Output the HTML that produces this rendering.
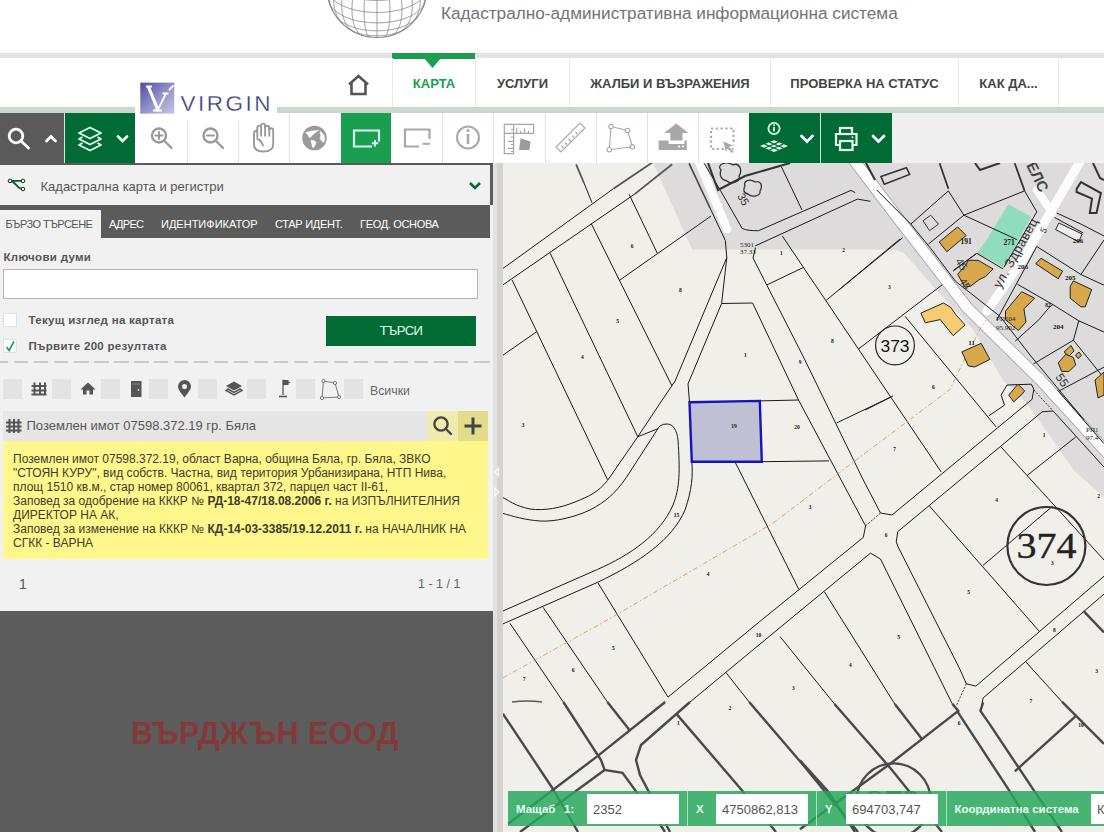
<!DOCTYPE html>
<html><head><meta charset="utf-8">
<style>
*{box-sizing:border-box;margin:0;padding:0}
html,body{width:1104px;height:836px;overflow:hidden;background:#fff;font-family:"Liberation Sans",sans-serif}
.abs{position:absolute}
svg{position:absolute;overflow:visible}
#title{left:441px;top:3px;font-size:17.2px;color:#737373;white-space:nowrap}
#gline{left:0;top:53px;width:1104px;height:5px;background:#e3e3e3}
.ni{position:absolute;top:58px;height:49px;border-left:1px solid #e8e8e8;font-size:13px;font-weight:bold;color:#444;text-align:center;line-height:51px;white-space:nowrap}
#ggline{left:0;top:107px;width:1104px;height:6px;background:#c9d8cc}
#tb{left:0;top:113px;width:1104px;height:50px;background:#efefef}
.tbw{position:absolute;top:113px;height:50px;width:52px;background:#fff;border-left:1px solid #e2e2e2}
.tbg{position:absolute;top:113px;height:50px;background:#006b35}
#panel{left:0;top:163px;width:493px;height:673px;background:#f1f1f1;border-top:2px solid #5a5a5a}
#scr{left:493px;top:163px;width:10px;height:673px;background:linear-gradient(90deg,#e2e2e2 0,#e2e2e2 40%,#d2d2d2 40%,#d2d2d2 100%)}
#map{left:503px;top:163px;width:601px;height:673px;background:#f1efe9;overflow:hidden}
.tab{position:absolute;top:210px;height:28px;line-height:28px;font-size:11px;color:#fff;white-space:nowrap}
.lbl{position:absolute;font-size:11.5px;letter-spacing:0.3px;font-weight:bold;color:#555;white-space:nowrap}
.sq{position:absolute;top:379px;width:19px;height:20px;background:#e3e3e3}
.yl{white-space:nowrap}
#ybox{left:3px;top:441px;width:485px;height:118px;background:#fff68c;padding:10.5px 10px 0 10px;font-size:12px;line-height:14px;color:#3d3d2a}
.bl{position:absolute;top:802.5px;font-size:11.5px;font-weight:bold;color:#e6fff0;white-space:nowrap}
.bi{position:absolute;top:794px;height:30px;background:#fff;font-size:13px;color:#555;padding-left:6px;line-height:32.5px;white-space:nowrap;overflow:hidden}
</style></head><body>
<!-- header -->
<svg style="left:0;top:0" width="1104" height="53"><g fill="none" stroke="#8a8a8a" stroke-width="0.9"><path d="M376.6 37.5L377.0 37.5L377.4 37.5M348.4 28.5L348.8 28.8L349.1 29.0L349.5 29.2L349.9 29.5L350.3 29.7L350.7 29.9L351.1 30.2L351.6 30.4L352.0 30.6L352.4 30.8L352.9 31.0L353.3 31.3L353.8 31.5L354.3 31.7L354.8 31.9L355.2 32.0L355.7 32.2L356.2 32.4L356.7 32.6L357.2 32.8L357.7 32.9L358.3 33.1L358.8 33.3L359.3 33.4L359.9 33.6L360.4 33.7L360.9 33.9L361.5 34.0L362.1 34.1L362.6 34.3L363.2 34.4L363.8 34.5L364.3 34.6L364.9 34.7L365.5 34.8L366.1 34.9L366.7 35.0L367.3 35.1L367.8 35.2L368.4 35.3L369.0 35.3L369.6 35.4L370.3 35.5L370.9 35.5L371.5 35.6L372.1 35.6L372.7 35.7L373.3 35.7L373.9 35.7L374.5 35.8L375.1 35.8L375.8 35.8L376.4 35.8L377.0 35.8L377.6 35.8L378.2 35.8L378.9 35.8L379.5 35.8L380.1 35.7L380.7 35.7L381.3 35.7L381.9 35.6L382.5 35.6L383.1 35.5L383.7 35.5L384.4 35.4L385.0 35.3L385.6 35.3L386.2 35.2L386.7 35.1L387.3 35.0L387.9 34.9L388.5 34.8L389.1 34.7L389.7 34.6L390.2 34.5L390.8 34.4L391.4 34.3L391.9 34.1L392.5 34.0L393.1 33.9L393.6 33.7L394.1 33.6L394.7 33.4L395.2 33.3L395.7 33.1L396.3 32.9L396.8 32.8L397.3 32.6L397.8 32.4L398.3 32.2L398.8 32.0L399.2 31.9L399.7 31.7L400.2 31.5L400.7 31.3L401.1 31.0L401.6 30.8L402.0 30.6L402.4 30.4L402.9 30.2L403.3 29.9L403.7 29.7L404.1 29.5L404.5 29.2L404.9 29.0L405.2 28.8L405.6 28.5M336.3 16.6L336.6 16.9L336.9 17.3L337.1 17.6L337.4 18.0L337.8 18.3L338.1 18.6L338.4 19.0L338.8 19.3L339.1 19.6L339.5 20.0L339.9 20.3L340.3 20.6L340.7 20.9L341.1 21.3L341.5 21.6L342.0 21.9L342.4 22.2L342.9 22.5L343.3 22.8L343.8 23.1L344.3 23.4L344.8 23.6L345.3 23.9L345.9 24.2L346.4 24.5L346.9 24.7L347.5 25.0L348.0 25.2L348.6 25.5L349.2 25.7L349.7 26.0L350.3 26.2L350.9 26.4L351.5 26.7L352.2 26.9L352.8 27.1L353.4 27.3L354.1 27.5L354.7 27.7L355.3 27.9L356.0 28.1L356.7 28.3L357.3 28.4L358.0 28.6L358.7 28.8L359.4 28.9L360.1 29.1L360.8 29.2L361.5 29.4L362.2 29.5L362.9 29.6L363.6 29.7L364.3 29.9L365.1 30.0L365.8 30.1L366.5 30.2L367.3 30.2L368.0 30.3L368.7 30.4L369.5 30.5L370.2 30.5L371.0 30.6L371.7 30.6L372.5 30.7L373.2 30.7L374.0 30.7L374.7 30.8L375.5 30.8L376.2 30.8L377.0 30.8L377.8 30.8L378.5 30.8L379.3 30.8L380.0 30.7L380.8 30.7L381.5 30.7L382.3 30.6L383.0 30.6L383.8 30.5L384.5 30.5L385.3 30.4L386.0 30.3L386.7 30.2L387.5 30.2L388.2 30.1L388.9 30.0L389.7 29.9L390.4 29.7L391.1 29.6L391.8 29.5L392.5 29.4L393.2 29.2L393.9 29.1L394.6 28.9L395.3 28.8L396.0 28.6L396.7 28.4L397.3 28.3L398.0 28.1L398.7 27.9L399.3 27.7L399.9 27.5L400.6 27.3L401.2 27.1L401.8 26.9L402.5 26.7L403.1 26.4L403.7 26.2L404.3 26.0L404.8 25.7L405.4 25.5L406.0 25.2L406.5 25.0L407.1 24.7L407.6 24.5L408.1 24.2L408.7 23.9L409.2 23.6L409.7 23.4L410.2 23.1L410.7 22.8L411.1 22.5L411.6 22.2L412.0 21.9L412.5 21.6L412.9 21.3L413.3 20.9L413.7 20.6L414.1 20.3L414.5 20.0L414.9 19.6L415.2 19.3L415.6 19.0L415.9 18.6L416.2 18.3L416.6 18.0L416.9 17.6L417.1 17.3L417.4 16.9L417.7 16.6M329.3 2.5L329.4 2.9L329.6 3.3L329.8 3.7L329.9 4.1L330.1 4.5L330.3 5.0L330.6 5.4L330.8 5.8L331.1 6.2L331.3 6.6L331.6 7.0L331.9 7.4L332.2 7.8L332.5 8.1L332.9 8.5L333.2 8.9L333.6 9.3L334.0 9.7L334.4 10.0L334.8 10.4L335.2 10.8L335.6 11.1L336.0 11.5L336.5 11.9L337.0 12.2L337.4 12.6L337.9 12.9L338.4 13.2L338.9 13.6L339.5 13.9L340.0 14.2L340.6 14.5L341.1 14.9L341.7 15.2L342.3 15.5L342.8 15.8L343.5 16.1L344.1 16.4L344.7 16.7L345.3 16.9L346.0 17.2L346.6 17.5L347.3 17.7L347.9 18.0L348.6 18.2L349.3 18.5L350.0 18.7L350.7 19.0L351.4 19.2L352.1 19.4L352.9 19.6L353.6 19.8L354.3 20.0L355.1 20.2L355.8 20.4L356.6 20.6L357.4 20.8L358.1 20.9L358.9 21.1L359.7 21.3L360.5 21.4L361.3 21.5L362.1 21.7L362.9 21.8L363.7 21.9L364.5 22.0L365.3 22.1L366.1 22.2L367.0 22.3L367.8 22.4L368.6 22.5L369.4 22.6L370.3 22.6L371.1 22.7L372.0 22.7L372.8 22.8L373.6 22.8L374.5 22.8L375.3 22.8L376.2 22.9L377.0 22.9L377.8 22.9L378.7 22.8L379.5 22.8L380.4 22.8L381.2 22.8L382.0 22.7L382.9 22.7L383.7 22.6L384.6 22.6L385.4 22.5L386.2 22.4L387.0 22.3L387.9 22.2L388.7 22.1L389.5 22.0L390.3 21.9L391.1 21.8L391.9 21.7L392.7 21.5L393.5 21.4L394.3 21.3L395.1 21.1L395.9 20.9L396.6 20.8L397.4 20.6L398.2 20.4L398.9 20.2L399.7 20.0L400.4 19.8L401.1 19.6L401.9 19.4L402.6 19.2L403.3 19.0L404.0 18.7L404.7 18.5L405.4 18.2L406.1 18.0L406.7 17.7L407.4 17.5L408.0 17.2L408.7 16.9L409.3 16.7L409.9 16.4L410.5 16.1L411.2 15.8L411.7 15.5L412.3 15.2L412.9 14.9L413.4 14.5L414.0 14.2L414.5 13.9L415.1 13.6L415.6 13.2L416.1 12.9L416.6 12.6L417.0 12.2L417.5 11.9L418.0 11.5L418.4 11.1L418.8 10.8L419.2 10.4L419.6 10.0L420.0 9.7L420.4 9.3L420.8 8.9L421.1 8.5L421.5 8.1L421.8 7.8L422.1 7.4L422.4 7.0L422.7 6.6L422.9 6.2L423.2 5.8L423.4 5.4L423.7 5.0L423.9 4.5L424.1 4.1L424.2 3.7L424.4 3.3L424.6 2.9L424.7 2.5M327.0 -12.5L327.0 -12.1L327.0 -11.6L327.1 -11.2L327.1 -10.8L327.2 -10.3L327.3 -9.9L327.4 -9.5L327.5 -9.0L327.6 -8.6L327.8 -8.2L327.9 -7.7L328.1 -7.3L328.3 -6.9L328.5 -6.5L328.7 -6.0L328.9 -5.6L329.2 -5.2L329.4 -4.8L329.7 -4.4L330.0 -3.9L330.3 -3.5L330.6 -3.1L331.0 -2.7L331.3 -2.3L331.7 -1.9L332.1 -1.5L332.4 -1.2L332.9 -0.8L333.3 -0.4L333.7 0.0L334.1 0.4L334.6 0.7L335.1 1.1L335.5 1.5L336.0 1.8L336.5 2.2L337.1 2.5L337.6 2.9L338.1 3.2L338.7 3.6L339.3 3.9L339.8 4.2L340.4 4.5L341.0 4.9L341.6 5.2L342.3 5.5L342.9 5.8L343.5 6.1L344.2 6.4L344.9 6.7L345.5 6.9L346.2 7.2L346.9 7.5L347.6 7.7L348.3 8.0L349.0 8.2L349.8 8.5L350.5 8.7L351.2 8.9L352.0 9.2L352.8 9.4L353.5 9.6L354.3 9.8L355.1 10.0L355.9 10.2L356.7 10.3L357.5 10.5L358.3 10.7L359.1 10.8L359.9 11.0L360.7 11.1L361.5 11.3L362.4 11.4L363.2 11.5L364.1 11.6L364.9 11.8L365.8 11.9L366.6 12.0L367.5 12.0L368.3 12.1L369.2 12.2L370.0 12.3L370.9 12.3L371.8 12.4L372.6 12.4L373.5 12.4L374.4 12.5L375.3 12.5L376.1 12.5L377.0 12.5L377.9 12.5L378.7 12.5L379.6 12.5L380.5 12.4L381.4 12.4L382.2 12.4L383.1 12.3L384.0 12.3L384.8 12.2L385.7 12.1L386.5 12.0L387.4 12.0L388.2 11.9L389.1 11.8L389.9 11.6L390.8 11.5L391.6 11.4L392.5 11.3L393.3 11.1L394.1 11.0L394.9 10.8L395.7 10.7L396.5 10.5L397.3 10.3L398.1 10.2L398.9 10.0L399.7 9.8L400.5 9.6L401.2 9.4L402.0 9.2L402.8 8.9L403.5 8.7L404.2 8.5L405.0 8.2L405.7 8.0L406.4 7.7L407.1 7.5L407.8 7.2L408.5 6.9L409.1 6.7L409.8 6.4L410.5 6.1L411.1 5.8L411.7 5.5L412.4 5.2L413.0 4.9L413.6 4.5L414.2 4.2L414.7 3.9L415.3 3.6L415.9 3.2L416.4 2.9L416.9 2.5L417.5 2.2L418.0 1.8L418.5 1.5L418.9 1.1L419.4 0.7L419.9 0.4L420.3 0.0L420.7 -0.4L421.1 -0.8L421.6 -1.2L421.9 -1.5L422.3 -1.9L422.7 -2.3L423.0 -2.7L423.4 -3.1L423.7 -3.5L424.0 -3.9L424.3 -4.4L424.6 -4.8L424.8 -5.2L425.1 -5.6L425.3 -6.0L425.5 -6.5L425.7 -6.9L425.9 -7.3L426.1 -7.7L426.2 -8.2L426.4 -8.6L426.5 -9.0L426.6 -9.5L426.7 -9.9L426.8 -10.3L426.9 -10.8L426.9 -11.2L427.0 -11.6L427.0 -12.1L427.0 -12.5M329.2 -27.1L329.1 -26.7L329.0 -26.2L328.9 -25.8L328.8 -25.4L328.8 -25.0L328.7 -24.5L328.7 -24.1L328.7 -23.7L328.7 -23.3L328.7 -22.9L328.8 -22.4L328.8 -22.0L328.9 -21.6L329.0 -21.2L329.1 -20.8L329.2 -20.3L329.3 -19.9L329.4 -19.5L329.6 -19.1L329.8 -18.7L329.9 -18.3L330.1 -17.9L330.3 -17.5L330.6 -17.1L330.8 -16.6L331.1 -16.2L331.3 -15.8L331.6 -15.4L331.9 -15.1L332.2 -14.7L332.5 -14.3L332.9 -13.9L333.2 -13.5L333.6 -13.1L334.0 -12.7L334.4 -12.4L334.8 -12.0L335.2 -11.6L335.6 -11.3L336.0 -10.9L336.5 -10.6L337.0 -10.2L337.4 -9.9L337.9 -9.5L338.4 -9.2L338.9 -8.8L339.5 -8.5L340.0 -8.2L340.6 -7.9L341.1 -7.5L341.7 -7.2L342.3 -6.9L342.8 -6.6L343.5 -6.3L344.1 -6.0L344.7 -5.8L345.3 -5.5L346.0 -5.2L346.6 -4.9L347.3 -4.7L347.9 -4.4L348.6 -4.2L349.3 -3.9L350.0 -3.7L350.7 -3.5L351.4 -3.2L352.1 -3.0L352.9 -2.8L353.6 -2.6L354.3 -2.4L355.1 -2.2L355.8 -2.0L356.6 -1.8L357.4 -1.6L358.1 -1.5L358.9 -1.3L359.7 -1.2L360.5 -1.0L361.3 -0.9L362.1 -0.7L362.9 -0.6L363.7 -0.5L364.5 -0.4L365.3 -0.3L366.1 -0.2L367.0 -0.1L367.8 -0.0L368.6 0.1L369.4 0.1L370.3 0.2L371.1 0.3L372.0 0.3L372.8 0.3L373.6 0.4L374.5 0.4L375.3 0.4L376.2 0.4L377.0 0.4L377.8 0.4L378.7 0.4L379.5 0.4L380.4 0.4L381.2 0.3L382.0 0.3L382.9 0.3L383.7 0.2L384.6 0.1L385.4 0.1L386.2 -0.0L387.0 -0.1L387.9 -0.2L388.7 -0.3L389.5 -0.4L390.3 -0.5L391.1 -0.6L391.9 -0.7L392.7 -0.9L393.5 -1.0L394.3 -1.2L395.1 -1.3L395.9 -1.5L396.6 -1.6L397.4 -1.8L398.2 -2.0L398.9 -2.2L399.7 -2.4L400.4 -2.6L401.1 -2.8L401.9 -3.0L402.6 -3.2L403.3 -3.5L404.0 -3.7L404.7 -3.9L405.4 -4.2L406.1 -4.4L406.7 -4.7L407.4 -4.9L408.0 -5.2L408.7 -5.5L409.3 -5.8L409.9 -6.0L410.5 -6.3L411.2 -6.6L411.7 -6.9L412.3 -7.2L412.9 -7.5L413.4 -7.9L414.0 -8.2L414.5 -8.5L415.1 -8.8L415.6 -9.2L416.1 -9.5L416.6 -9.9L417.0 -10.2L417.5 -10.6L418.0 -10.9L418.4 -11.3L418.8 -11.6L419.2 -12.0L419.6 -12.4L420.0 -12.7L420.4 -13.1L420.8 -13.5L421.1 -13.9L421.5 -14.3L421.8 -14.7L422.1 -15.1L422.4 -15.4L422.7 -15.8L422.9 -16.2L423.2 -16.6L423.4 -17.1L423.7 -17.5L423.9 -17.9L424.1 -18.3L424.2 -18.7L424.4 -19.1L424.6 -19.5L424.7 -19.9L424.8 -20.3L424.9 -20.8L425.0 -21.2L425.1 -21.6L425.2 -22.0L425.2 -22.4L425.3 -22.9L425.3 -23.3L425.3 -23.7L425.3 -24.1L425.3 -24.5L425.2 -25.0L425.2 -25.4L425.1 -25.8L425.0 -26.2L424.9 -26.7L424.8 -27.1M377.0 -55.8L377.0 -55.4L377.0 -54.9L377.0 -54.4L377.0 -54.0L377.0 -53.5L377.0 -53.0L377.0 -52.4L377.0 -51.9L377.0 -51.4L377.0 -50.8L377.0 -50.2L377.0 -49.7L377.0 -49.1L377.0 -48.5L377.0 -47.9L377.0 -47.2L377.0 -46.6L377.0 -46.0L377.0 -45.3L377.0 -44.6L377.0 -44.0L377.0 -43.3L377.0 -42.6L377.0 -41.9L377.0 -41.2L377.0 -40.5L377.0 -39.7L377.0 -39.0L377.0 -38.3L377.0 -37.5L377.0 -36.7L377.0 -36.0L377.0 -35.2L377.0 -34.4L377.0 -33.6L377.0 -32.8L377.0 -32.0L377.0 -31.2L377.0 -30.4L377.0 -29.6L377.0 -28.8L377.0 -28.0L377.0 -27.1L377.0 -26.3L377.0 -25.4L377.0 -24.6L377.0 -23.7L377.0 -22.9L377.0 -22.0L377.0 -21.2L377.0 -20.3L377.0 -19.5L377.0 -18.6L377.0 -17.7L377.0 -16.9L377.0 -16.0L377.0 -15.1L377.0 -14.2L377.0 -13.4L377.0 -12.5L377.0 -11.6L377.0 -10.8L377.0 -9.9L377.0 -9.0L377.0 -8.1L377.0 -7.3L377.0 -6.4L377.0 -5.5L377.0 -4.7L377.0 -3.8L377.0 -3.0L377.0 -2.1L377.0 -1.3L377.0 -0.4L377.0 0.4L377.0 1.3L377.0 2.1L377.0 3.0L377.0 3.8L377.0 4.6L377.0 5.4L377.0 6.2L377.0 7.0L377.0 7.8L377.0 8.6L377.0 9.4L377.0 10.2L377.0 11.0L377.0 11.7L377.0 12.5L377.0 13.3L377.0 14.0L377.0 14.7L377.0 15.5L377.0 16.2L377.0 16.9L377.0 17.6L377.0 18.3L377.0 19.0L377.0 19.6L377.0 20.3L377.0 21.0L377.0 21.6L377.0 22.2L377.0 22.9L377.0 23.5L377.0 24.1L377.0 24.7L377.0 25.2L377.0 25.8L377.0 26.4L377.0 26.9L377.0 27.4L377.0 28.0L377.0 28.5L377.0 29.0L377.0 29.4L377.0 29.9L377.0 30.4L377.0 30.8L377.0 31.2L377.0 31.6L377.0 32.1L377.0 32.4L377.0 32.8L377.0 33.2L377.0 33.5L377.0 33.9L377.0 34.2L377.0 34.5L377.0 34.8L377.0 35.1L377.0 35.3L377.0 35.6L377.0 35.8L377.0 36.0L377.0 36.2L377.0 36.4L377.0 36.6L377.0 36.7L377.0 36.9L377.0 37.0L377.0 37.1L377.0 37.2L377.0 37.3L377.0 37.4L377.0 37.4L377.0 37.5L377.0 37.5L377.0 37.5M377.0 -55.8L377.2 -55.4L377.5 -54.9L377.7 -54.5L377.9 -54.0L378.1 -53.5L378.4 -53.0L378.6 -52.5L378.8 -52.0L379.0 -51.5L379.2 -51.0L379.5 -50.4L379.7 -49.8L379.9 -49.3L380.1 -48.7L380.3 -48.1L380.6 -47.5L380.8 -46.8L381.0 -46.2L381.2 -45.6L381.4 -44.9L381.6 -44.3L381.8 -43.6L382.1 -42.9L382.3 -42.2L382.5 -41.5L382.7 -40.8L382.9 -40.1L383.1 -39.4L383.3 -38.7L383.5 -37.9L383.7 -37.2L383.9 -36.4L384.0 -35.7L384.2 -34.9L384.4 -34.1L384.6 -33.3L384.8 -32.5L385.0 -31.8L385.1 -31.0L385.3 -30.1L385.5 -29.3L385.7 -28.5L385.8 -27.7L386.0 -26.9L386.2 -26.0L386.3 -25.2L386.5 -24.4L386.6 -23.5L386.8 -22.7L386.9 -21.8L387.1 -21.0L387.2 -20.1L387.3 -19.3L387.5 -18.4L387.6 -17.6L387.7 -16.7L387.9 -15.8L388.0 -15.0L388.1 -14.1L388.2 -13.2L388.3 -12.4L388.4 -11.5L388.5 -10.6L388.6 -9.8L388.7 -8.9L388.8 -8.1L388.9 -7.2L389.0 -6.3L389.1 -5.5L389.2 -4.6L389.2 -3.8L389.3 -2.9L389.4 -2.1L389.4 -1.2L389.5 -0.4L389.6 0.5L389.6 1.3L389.7 2.1L389.7 2.9L389.7 3.8L389.8 4.6L389.8 5.4L389.8 6.2L389.9 7.0L389.9 7.8L389.9 8.6L389.9 9.3L389.9 10.1L389.9 10.9L389.9 11.6L389.9 12.4L389.9 13.1L389.9 13.9L389.9 14.6L389.9 15.3L389.9 16.0L389.8 16.7L389.8 17.4L389.8 18.1L389.7 18.8L389.7 19.5L389.7 20.1L389.6 20.8L389.6 21.4L389.5 22.0L389.4 22.6L389.4 23.3L389.3 23.8L389.2 24.4L389.2 25.0L389.1 25.6L389.0 26.1L388.9 26.6L388.8 27.2L388.7 27.7L388.6 28.2L388.5 28.7L388.4 29.2L388.3 29.6L388.2 30.1L388.1 30.5L388.0 30.9L387.9 31.3L387.7 31.7L387.6 32.1L387.5 32.5L387.3 32.8L387.2 33.2L387.1 33.5L386.9 33.8L386.8 34.1L386.6 34.4L386.5 34.7L386.3 35.0L386.2 35.2L386.0 35.4L385.8 35.6L385.7 35.8L385.5 36.0L385.3 36.2L385.1 36.3L385.0 36.5L384.8 36.6L384.6 36.7L384.4 36.8L384.2 36.9L384.0 37.0L383.9 37.0L383.7 37.1M377.0 -55.8L377.4 -55.4L377.9 -55.0L378.3 -54.6L378.7 -54.2L379.2 -53.7L379.6 -53.3L380.0 -52.8L380.5 -52.4L380.9 -51.9L381.3 -51.4L381.8 -50.9L382.2 -50.4L382.6 -49.8L383.0 -49.3L383.5 -48.7L383.9 -48.2L384.3 -47.6L384.7 -47.0L385.1 -46.4L385.6 -45.8L386.0 -45.2L386.4 -44.5L386.8 -43.9L387.2 -43.3L387.6 -42.6L388.0 -41.9L388.3 -41.3L388.7 -40.6L389.1 -39.9L389.5 -39.2L389.9 -38.5L390.2 -37.7L390.6 -37.0L391.0 -36.3L391.3 -35.6L391.7 -34.8L392.0 -34.1L392.4 -33.3L392.7 -32.5L393.1 -31.8L393.4 -31.0L393.7 -30.2L394.0 -29.4L394.4 -28.6L394.7 -27.8L395.0 -27.0L395.3 -26.2L395.6 -25.4L395.9 -24.6L396.2 -23.7L396.4 -22.9L396.7 -22.1L397.0 -21.3L397.2 -20.4L397.5 -19.6L397.7 -18.8L398.0 -17.9L398.2 -17.1L398.4 -16.2L398.7 -15.4L398.9 -14.6L399.1 -13.7L399.3 -12.9L399.5 -12.0L399.7 -11.2L399.8 -10.3L400.0 -9.5L400.2 -8.6L400.3 -7.8L400.5 -7.0L400.6 -6.1L400.8 -5.3L400.9 -4.5L401.0 -3.6L401.1 -2.8L401.3 -2.0L401.4 -1.1L401.5 -0.3L401.5 0.5L401.6 1.3L401.7 2.1L401.8 2.9L401.8 3.7L401.9 4.5L401.9 5.3L401.9 6.1L402.0 6.9L402.0 7.6L402.0 8.4L402.0 9.2L402.0 9.9L402.0 10.6L402.0 11.4L401.9 12.1L401.9 12.8L401.9 13.6L401.8 14.3L401.8 15.0L401.7 15.7L401.6 16.3L401.5 17.0L401.5 17.7L401.4 18.3L401.3 19.0L401.1 19.6L401.0 20.2L400.9 20.9L400.8 21.5L400.6 22.1L400.5 22.7L400.3 23.2L400.2 23.8L400.0 24.3L399.8 24.9L399.7 25.4L399.5 25.9L399.3 26.4L399.1 26.9L398.9 27.4L398.7 27.9L398.4 28.4L398.2 28.8L398.0 29.2L397.7 29.7L397.5 30.1L397.2 30.5L397.0 30.9L396.7 31.2L396.4 31.6L396.2 31.9L395.9 32.2L395.6 32.6L395.3 32.9L395.0 33.2L394.7 33.4L394.4 33.7L394.0 33.9L393.7 34.2L393.4 34.4L393.1 34.6L392.7 34.8L392.4 35.0L392.0 35.1L391.7 35.3L391.3 35.4L391.0 35.5M377.0 -55.8L377.6 -55.5L378.2 -55.2L378.9 -54.8L379.5 -54.5L380.1 -54.1L380.7 -53.7L381.3 -53.3L381.9 -52.9L382.5 -52.5L383.1 -52.1L383.7 -51.6L384.4 -51.2L385.0 -50.7L385.6 -50.2L386.2 -49.8L386.7 -49.3L387.3 -48.7L387.9 -48.2L388.5 -47.7L389.1 -47.1L389.7 -46.6L390.2 -46.0L390.8 -45.5L391.4 -44.9L391.9 -44.3L392.5 -43.7L393.1 -43.1L393.6 -42.4L394.1 -41.8L394.7 -41.2L395.2 -40.5L395.7 -39.9L396.3 -39.2L396.8 -38.5L397.3 -37.8L397.8 -37.1L398.3 -36.4L398.8 -35.7L399.2 -35.0L399.7 -34.3L400.2 -33.6L400.7 -32.9L401.1 -32.1L401.6 -31.4L402.0 -30.6L402.4 -29.9L402.9 -29.1L403.3 -28.3L403.7 -27.6L404.1 -26.8L404.5 -26.0L404.9 -25.2L405.2 -24.4L405.6 -23.7L406.0 -22.9L406.3 -22.1L406.7 -21.3L407.0 -20.5L407.3 -19.6L407.6 -18.8L407.9 -18.0L408.2 -17.2L408.5 -16.4L408.8 -15.6L409.0 -14.8L409.3 -14.0L409.5 -13.1L409.8 -12.3L410.0 -11.5L410.2 -10.7L410.4 -9.9L410.6 -9.1L410.8 -8.3L411.0 -7.4L411.2 -6.6L411.3 -5.8L411.4 -5.0L411.6 -4.2L411.7 -3.4L411.8 -2.6L411.9 -1.8L412.0 -1.0L412.1 -0.2L412.2 0.6L412.2 1.3L412.3 2.1L412.3 2.9L412.3 3.7L412.3 4.4L412.4 5.2L412.3 5.9L412.3 6.7L412.3 7.4L412.3 8.2L412.2 8.9L412.2 9.6L412.1 10.3L412.0 11.0L411.9 11.7L411.8 12.4L411.7 13.1L411.6 13.8L411.4 14.5L411.3 15.1L411.2 15.8L411.0 16.4L410.8 17.1L410.6 17.7L410.4 18.3L410.2 18.9L410.0 19.5L409.8 20.1L409.5 20.7L409.3 21.3L409.0 21.8L408.8 22.4L408.5 22.9L408.2 23.4L407.9 24.0L407.6 24.5L407.3 25.0L407.0 25.4L406.7 25.9L406.3 26.4L406.0 26.8L405.6 27.3L405.2 27.7L404.9 28.1L404.5 28.5L404.1 28.9L403.7 29.2L403.3 29.6L402.9 30.0L402.4 30.3L402.0 30.6L401.6 30.9L401.1 31.2L400.7 31.5L400.2 31.8L399.7 32.0M377.0 -55.8L377.8 -55.6L378.5 -55.3L379.3 -55.1L380.0 -54.8L380.8 -54.5L381.5 -54.3L382.3 -54.0L383.0 -53.6L383.8 -53.3L384.5 -53.0L385.3 -52.6L386.0 -52.3L386.7 -51.9L387.5 -51.5L388.2 -51.1L388.9 -50.7L389.7 -50.3L390.4 -49.8L391.1 -49.4L391.8 -48.9L392.5 -48.4L393.2 -48.0L393.9 -47.5L394.6 -47.0L395.3 -46.5L396.0 -45.9L396.7 -45.4L397.3 -44.9L398.0 -44.3L398.7 -43.8L399.3 -43.2L399.9 -42.6L400.6 -42.0L401.2 -41.4L401.8 -40.8L402.5 -40.2L403.1 -39.6L403.7 -38.9L404.3 -38.3L404.8 -37.6L405.4 -37.0L406.0 -36.3L406.5 -35.6L407.1 -35.0L407.6 -34.3L408.1 -33.6L408.7 -32.9L409.2 -32.2L409.7 -31.5L410.2 -30.8L410.7 -30.0L411.1 -29.3L411.6 -28.6L412.0 -27.8L412.5 -27.1L412.9 -26.4L413.3 -25.6L413.7 -24.8L414.1 -24.1L414.5 -23.3L414.9 -22.6L415.2 -21.8L415.6 -21.0L415.9 -20.2L416.2 -19.5L416.6 -18.7L416.9 -17.9L417.1 -17.1L417.4 -16.3L417.7 -15.6L417.9 -14.8L418.2 -14.0L418.4 -13.2L418.6 -12.4L418.8 -11.6L419.0 -10.8L419.2 -10.1L419.4 -9.3L419.5 -8.5L419.6 -7.7L419.8 -6.9L419.9 -6.1L420.0 -5.4L420.1 -4.6L420.1 -3.8L420.2 -3.1L420.2 -2.3L420.3 -1.5L420.3 -0.8L420.3 0.0L420.3 0.8L420.3 1.5L420.2 2.2L420.2 3.0L420.1 3.7L420.1 4.5L420.0 5.2L419.9 5.9L419.8 6.6L419.6 7.3L419.5 8.0L419.4 8.7L419.2 9.4L419.0 10.1L418.8 10.8L418.6 11.5L418.4 12.1L418.2 12.8L417.9 13.4L417.7 14.1L417.4 14.7L417.1 15.3L416.9 15.9L416.6 16.5L416.2 17.1L415.9 17.7L415.6 18.3L415.2 18.9L414.9 19.4L414.5 20.0L414.1 20.5L413.7 21.0L413.3 21.6L412.9 22.1L412.5 22.6L412.0 23.1L411.6 23.5L411.1 24.0L410.7 24.5L410.2 24.9M377.0 -55.8L377.8 -55.7L378.7 -55.5L379.5 -55.4L380.4 -55.2L381.2 -55.1L382.0 -54.9L382.9 -54.7L383.7 -54.5L384.6 -54.3L385.4 -54.0L386.2 -53.8L387.0 -53.5L387.9 -53.2L388.7 -52.9L389.5 -52.7L390.3 -52.3L391.1 -52.0L391.9 -51.7L392.7 -51.3L393.5 -51.0L394.3 -50.6L395.1 -50.2L395.9 -49.8L396.6 -49.4L397.4 -49.0L398.2 -48.6L398.9 -48.1L399.7 -47.7L400.4 -47.2L401.1 -46.8L401.9 -46.3L402.6 -45.8L403.3 -45.3L404.0 -44.8L404.7 -44.3L405.4 -43.7L406.1 -43.2L406.7 -42.6L407.4 -42.1L408.0 -41.5L408.7 -40.9L409.3 -40.3L409.9 -39.8L410.5 -39.2L411.2 -38.5L411.7 -37.9L412.3 -37.3L412.9 -36.7L413.4 -36.0L414.0 -35.4L414.5 -34.7L415.1 -34.1L415.6 -33.4L416.1 -32.7L416.6 -32.0L417.0 -31.3L417.5 -30.7L418.0 -30.0L418.4 -29.3L418.8 -28.5L419.2 -27.8L419.6 -27.1L420.0 -26.4L420.4 -25.7L420.8 -24.9L421.1 -24.2L421.5 -23.5L421.8 -22.7L422.1 -22.0L422.4 -21.2L422.7 -20.5L422.9 -19.7L423.2 -19.0L423.4 -18.2L423.7 -17.5L423.9 -16.7L424.1 -15.9L424.2 -15.2L424.4 -14.4L424.6 -13.6L424.7 -12.9L424.8 -12.1L424.9 -11.4L425.0 -10.6L425.1 -9.8L425.2 -9.1L425.2 -8.3L425.3 -7.5L425.3 -6.8L425.3 -6.0L425.3 -5.3L425.3 -4.5L425.2 -3.8L425.2 -3.0L425.1 -2.3L425.0 -1.5L424.9 -0.8L424.8 -0.1L424.7 0.7L424.6 1.4L424.4 2.1L424.2 2.8L424.1 3.5L423.9 4.3L423.7 5.0L423.4 5.7L423.2 6.3L422.9 7.0L422.7 7.7L422.4 8.4L422.1 9.1L421.8 9.7L421.5 10.4L421.1 11.0M332.9 11.0L332.5 10.4L332.2 9.7L331.9 9.1L331.6 8.4L331.3 7.7L331.1 7.0L330.8 6.3L330.6 5.7L330.3 5.0L330.1 4.3L329.9 3.5L329.8 2.8L329.6 2.1L329.4 1.4L329.3 0.7L329.2 -0.1L329.1 -0.8L329.0 -1.5L328.9 -2.3L328.8 -3.0L328.8 -3.8L328.7 -4.5L328.7 -5.3L328.7 -6.0L328.7 -6.8L328.7 -7.5L328.8 -8.3L328.8 -9.1L328.9 -9.8L329.0 -10.6L329.1 -11.4L329.2 -12.1L329.3 -12.9L329.4 -13.6L329.6 -14.4L329.8 -15.2L329.9 -15.9L330.1 -16.7L330.3 -17.5L330.6 -18.2L330.8 -19.0L331.1 -19.7L331.3 -20.5L331.6 -21.2L331.9 -22.0L332.2 -22.7L332.5 -23.5L332.9 -24.2L333.2 -24.9L333.6 -25.7L334.0 -26.4L334.4 -27.1L334.8 -27.8L335.2 -28.5L335.6 -29.3L336.0 -30.0L336.5 -30.7L337.0 -31.3L337.4 -32.0L337.9 -32.7L338.4 -33.4L338.9 -34.1L339.5 -34.7L340.0 -35.4L340.6 -36.0L341.1 -36.7L341.7 -37.3L342.3 -37.9L342.8 -38.5L343.5 -39.2L344.1 -39.8L344.7 -40.3L345.3 -40.9L346.0 -41.5L346.6 -42.1L347.3 -42.6L347.9 -43.2L348.6 -43.7L349.3 -44.3L350.0 -44.8L350.7 -45.3L351.4 -45.8L352.1 -46.3L352.9 -46.8L353.6 -47.2L354.3 -47.7L355.1 -48.1L355.8 -48.6L356.6 -49.0L357.4 -49.4L358.1 -49.8L358.9 -50.2L359.7 -50.6L360.5 -51.0L361.3 -51.3L362.1 -51.7L362.9 -52.0L363.7 -52.3L364.5 -52.7L365.3 -52.9L366.1 -53.2L367.0 -53.5L367.8 -53.8L368.6 -54.0L369.4 -54.3L370.3 -54.5L371.1 -54.7L372.0 -54.9L372.8 -55.1L373.6 -55.2L374.5 -55.4L375.3 -55.5L376.2 -55.7L377.0 -55.8M343.8 24.9L343.3 24.5L342.9 24.0L342.4 23.5L342.0 23.1L341.5 22.6L341.1 22.1L340.7 21.6L340.3 21.0L339.9 20.5L339.5 20.0L339.1 19.4L338.8 18.9L338.4 18.3L338.1 17.7L337.8 17.1L337.4 16.5L337.1 15.9L336.9 15.3L336.6 14.7L336.3 14.1L336.1 13.4L335.8 12.8L335.6 12.1L335.4 11.5L335.2 10.8L335.0 10.1L334.8 9.4L334.6 8.7L334.5 8.0L334.4 7.3L334.2 6.6L334.1 5.9L334.0 5.2L333.9 4.5L333.9 3.7L333.8 3.0L333.8 2.2L333.7 1.5L333.7 0.8L333.7 0.0L333.7 -0.8L333.7 -1.5L333.8 -2.3L333.8 -3.1L333.9 -3.8L333.9 -4.6L334.0 -5.4L334.1 -6.1L334.2 -6.9L334.4 -7.7L334.5 -8.5L334.6 -9.3L334.8 -10.1L335.0 -10.8L335.2 -11.6L335.4 -12.4L335.6 -13.2L335.8 -14.0L336.1 -14.8L336.3 -15.6L336.6 -16.3L336.9 -17.1L337.1 -17.9L337.4 -18.7L337.8 -19.5L338.1 -20.2L338.4 -21.0L338.8 -21.8L339.1 -22.6L339.5 -23.3L339.9 -24.1L340.3 -24.8L340.7 -25.6L341.1 -26.4L341.5 -27.1L342.0 -27.8L342.4 -28.6L342.9 -29.3L343.3 -30.0L343.8 -30.8L344.3 -31.5L344.8 -32.2L345.3 -32.9L345.9 -33.6L346.4 -34.3L346.9 -35.0L347.5 -35.6L348.0 -36.3L348.6 -37.0L349.2 -37.6L349.7 -38.3L350.3 -38.9L350.9 -39.6L351.5 -40.2L352.2 -40.8L352.8 -41.4L353.4 -42.0L354.1 -42.6L354.7 -43.2L355.3 -43.7L356.0 -44.3L356.7 -44.9L357.3 -45.4L358.0 -45.9L358.7 -46.5L359.4 -47.0L360.1 -47.5L360.8 -48.0L361.5 -48.4L362.2 -48.9L362.9 -49.4L363.6 -49.8L364.3 -50.3L365.1 -50.7L365.8 -51.1L366.5 -51.5L367.3 -51.9L368.0 -52.3L368.7 -52.6L369.5 -53.0L370.2 -53.3L371.0 -53.6L371.7 -54.0L372.5 -54.3L373.2 -54.5L374.0 -54.8L374.7 -55.1L375.5 -55.3L376.2 -55.6L377.0 -55.8M354.3 32.0L353.8 31.8L353.3 31.5L352.9 31.2L352.4 30.9L352.0 30.6L351.6 30.3L351.1 30.0L350.7 29.6L350.3 29.2L349.9 28.9L349.5 28.5L349.1 28.1L348.8 27.7L348.4 27.3L348.0 26.8L347.7 26.4L347.3 25.9L347.0 25.4L346.7 25.0L346.4 24.5L346.1 24.0L345.8 23.4L345.5 22.9L345.2 22.4L345.0 21.8L344.7 21.3L344.5 20.7L344.2 20.1L344.0 19.5L343.8 18.9L343.6 18.3L343.4 17.7L343.2 17.1L343.0 16.4L342.8 15.8L342.7 15.1L342.6 14.5L342.4 13.8L342.3 13.1L342.2 12.4L342.1 11.7L342.0 11.0L341.9 10.3L341.8 9.6L341.8 8.9L341.7 8.2L341.7 7.4L341.7 6.7L341.7 5.9L341.6 5.2L341.7 4.4L341.7 3.7L341.7 2.9L341.7 2.1L341.8 1.3L341.8 0.6L341.9 -0.2L342.0 -1.0L342.1 -1.8L342.2 -2.6L342.3 -3.4L342.4 -4.2L342.6 -5.0L342.7 -5.8L342.8 -6.6L343.0 -7.4L343.2 -8.3L343.4 -9.1L343.6 -9.9L343.8 -10.7L344.0 -11.5L344.2 -12.3L344.5 -13.1L344.7 -14.0L345.0 -14.8L345.2 -15.6L345.5 -16.4L345.8 -17.2L346.1 -18.0L346.4 -18.8L346.7 -19.6L347.0 -20.5L347.3 -21.3L347.7 -22.1L348.0 -22.9L348.4 -23.7L348.8 -24.4L349.1 -25.2L349.5 -26.0L349.9 -26.8L350.3 -27.6L350.7 -28.3L351.1 -29.1L351.6 -29.9L352.0 -30.6L352.4 -31.4L352.9 -32.1L353.3 -32.9L353.8 -33.6L354.3 -34.3L354.8 -35.0L355.2 -35.7L355.7 -36.4L356.2 -37.1L356.7 -37.8L357.2 -38.5L357.7 -39.2L358.3 -39.9L358.8 -40.5L359.3 -41.2L359.9 -41.8L360.4 -42.4L360.9 -43.1L361.5 -43.7L362.1 -44.3L362.6 -44.9L363.2 -45.5L363.8 -46.0L364.3 -46.6L364.9 -47.1L365.5 -47.7L366.1 -48.2L366.7 -48.7L367.3 -49.3L367.8 -49.8L368.4 -50.2L369.0 -50.7L369.6 -51.2L370.3 -51.6L370.9 -52.1L371.5 -52.5L372.1 -52.9L372.7 -53.3L373.3 -53.7L373.9 -54.1L374.5 -54.5L375.1 -54.8L375.8 -55.2L376.4 -55.5L377.0 -55.8M363.0 35.5L362.7 35.4L362.3 35.3L362.0 35.1L361.6 35.0L361.3 34.8L360.9 34.6L360.6 34.4L360.3 34.2L360.0 33.9L359.6 33.7L359.3 33.4L359.0 33.2L358.7 32.9L358.4 32.6L358.1 32.2L357.8 31.9L357.6 31.6L357.3 31.2L357.0 30.9L356.8 30.5L356.5 30.1L356.3 29.7L356.0 29.2L355.8 28.8L355.6 28.4L355.3 27.9L355.1 27.4L354.9 26.9L354.7 26.4L354.5 25.9L354.3 25.4L354.2 24.9L354.0 24.3L353.8 23.8L353.7 23.2L353.5 22.7L353.4 22.1L353.2 21.5L353.1 20.9L353.0 20.2L352.9 19.6L352.7 19.0L352.6 18.3L352.5 17.7L352.5 17.0L352.4 16.3L352.3 15.7L352.2 15.0L352.2 14.3L352.1 13.6L352.1 12.8L352.1 12.1L352.0 11.4L352.0 10.6L352.0 9.9L352.0 9.2L352.0 8.4L352.0 7.6L352.0 6.9L352.1 6.1L352.1 5.3L352.1 4.5L352.2 3.7L352.2 2.9L352.3 2.1L352.4 1.3L352.5 0.5L352.5 -0.3L352.6 -1.1L352.7 -2.0L352.9 -2.8L353.0 -3.6L353.1 -4.5L353.2 -5.3L353.4 -6.1L353.5 -7.0L353.7 -7.8L353.8 -8.6L354.0 -9.5L354.2 -10.3L354.3 -11.2L354.5 -12.0L354.7 -12.9L354.9 -13.7L355.1 -14.6L355.3 -15.4L355.6 -16.2L355.8 -17.1L356.0 -17.9L356.3 -18.8L356.5 -19.6L356.8 -20.4L357.0 -21.3L357.3 -22.1L357.6 -22.9L357.8 -23.7L358.1 -24.6L358.4 -25.4L358.7 -26.2L359.0 -27.0L359.3 -27.8L359.6 -28.6L360.0 -29.4L360.3 -30.2L360.6 -31.0L360.9 -31.8L361.3 -32.5L361.6 -33.3L362.0 -34.1L362.3 -34.8L362.7 -35.6L363.0 -36.3L363.4 -37.0L363.8 -37.7L364.1 -38.5L364.5 -39.2L364.9 -39.9L365.3 -40.6L365.7 -41.3L366.0 -41.9L366.4 -42.6L366.8 -43.3L367.2 -43.9L367.6 -44.5L368.0 -45.2L368.4 -45.8L368.9 -46.4L369.3 -47.0L369.7 -47.6L370.1 -48.2L370.5 -48.7L371.0 -49.3L371.4 -49.8L371.8 -50.4L372.2 -50.9L372.7 -51.4L373.1 -51.9L373.5 -52.4L374.0 -52.8L374.4 -53.3L374.8 -53.7L375.3 -54.2L375.7 -54.6L376.1 -55.0L376.6 -55.4L377.0 -55.8M370.3 37.1L370.1 37.0L370.0 37.0L369.8 36.9L369.6 36.8L369.4 36.7L369.2 36.6L369.0 36.5L368.9 36.3L368.7 36.2L368.5 36.0L368.3 35.8L368.2 35.6L368.0 35.4L367.8 35.2L367.7 35.0L367.5 34.7L367.4 34.4L367.2 34.1L367.1 33.8L366.9 33.5L366.8 33.2L366.7 32.8L366.5 32.5L366.4 32.1L366.3 31.7L366.1 31.3L366.0 30.9L365.9 30.5L365.8 30.1L365.7 29.6L365.6 29.2L365.5 28.7L365.4 28.2L365.3 27.7L365.2 27.2L365.1 26.6L365.0 26.1L364.9 25.6L364.8 25.0L364.8 24.4L364.7 23.8L364.6 23.3L364.6 22.6L364.5 22.0L364.4 21.4L364.4 20.8L364.3 20.1L364.3 19.5L364.3 18.8L364.2 18.1L364.2 17.4L364.2 16.7L364.1 16.0L364.1 15.3L364.1 14.6L364.1 13.9L364.1 13.1L364.1 12.4L364.1 11.6L364.1 10.9L364.1 10.1L364.1 9.3L364.1 8.6L364.1 7.8L364.1 7.0L364.2 6.2L364.2 5.4L364.2 4.6L364.3 3.8L364.3 2.9L364.3 2.1L364.4 1.3L364.4 0.5L364.5 -0.4L364.6 -1.2L364.6 -2.1L364.7 -2.9L364.8 -3.8L364.8 -4.6L364.9 -5.5L365.0 -6.3L365.1 -7.2L365.2 -8.1L365.3 -8.9L365.4 -9.8L365.5 -10.6L365.6 -11.5L365.7 -12.4L365.8 -13.2L365.9 -14.1L366.0 -15.0L366.1 -15.8L366.3 -16.7L366.4 -17.6L366.5 -18.4L366.7 -19.3L366.8 -20.1L366.9 -21.0L367.1 -21.8L367.2 -22.7L367.4 -23.5L367.5 -24.4L367.7 -25.2L367.8 -26.0L368.0 -26.9L368.2 -27.7L368.3 -28.5L368.5 -29.3L368.7 -30.1L368.9 -31.0L369.0 -31.8L369.2 -32.5L369.4 -33.3L369.6 -34.1L369.8 -34.9L370.0 -35.7L370.1 -36.4L370.3 -37.2L370.5 -37.9L370.7 -38.7L370.9 -39.4L371.1 -40.1L371.3 -40.8L371.5 -41.5L371.7 -42.2L371.9 -42.9L372.2 -43.6L372.4 -44.3L372.6 -44.9L372.8 -45.6L373.0 -46.2L373.2 -46.8L373.4 -47.5L373.7 -48.1L373.9 -48.7L374.1 -49.3L374.3 -49.8L374.5 -50.4L374.8 -51.0L375.0 -51.5L375.2 -52.0L375.4 -52.5L375.6 -53.0L375.9 -53.5L376.1 -54.0L376.3 -54.5L376.5 -54.9L376.8 -55.4L377.0 -55.8"/><circle cx="377" cy="-12.5" r="50" stroke-width="1.2"/></g></svg>
<div class="abs" id="title">Кадастрално-административна информационна система</div>
<div class="abs" id="gline"></div>
<div class="abs" style="left:392px;top:53px;width:83px;height:6px;background:#1a9e50"></div>
<div class="ni" style="left:392px;width:83px;color:#1a9e50">КАРТА</div>
<svg style="left:424px;top:58px" width="18" height="11"><path d="M0 0H17L8.5 10Z" fill="#1a9e50"/></svg>
<div class="ni" style="left:475px;width:94px">УСЛУГИ</div>
<div class="ni" style="left:569px;width:201px">ЖАЛБИ И ВЪЗРАЖЕНИЯ</div>
<div class="ni" style="left:770px;width:188px">ПРОВЕРКА НА СТАТУС</div>
<div class="ni" style="left:958px;width:100px">КАК ДА...</div>
<div class="ni" style="left:1058px;width:46px"></div>
<svg style="left:346px;top:74px" width="26" height="22"><path d="M3 10.5L12.5 2L22 10.5M5.5 9V20H19.5V9" fill="none" stroke="#555" stroke-width="2.6" stroke-linejoin="miter"/></svg>
<div class="abs" id="ggline"></div>
<!-- toolbar -->
<div class="abs" id="tb"></div>
<div class="abs" style="left:0;top:113px;width:64px;height:50px;background:#5b5b5b"></div>
<div class="abs" style="left:64px;top:113px;width:1px;height:50px;background:#cfeedd"></div>
<div class="tbg" style="left:65px;width:70px"></div>
<div class="tbw" style="left:135px;border-left:0"></div>
<div class="tbw" style="left:187px;width:51px"></div>
<div class="tbw" style="left:238px;width:51px"></div>
<div class="tbw" style="left:289px;width:52px"></div>
<div class="abs" style="left:341px;top:113px;width:50px;height:50px;background:#1a9e50"></div>
<div class="tbw" style="left:391px;width:51px;border-left:0"></div>
<div class="tbw" style="left:442px;width:51px"></div>
<div class="tbw" style="left:493px;width:52px"></div>
<div class="tbw" style="left:545px;width:51px"></div>
<div class="tbw" style="left:596px;width:51px"></div>
<div class="tbw" style="left:647px;width:51px"></div>
<div class="tbw" style="left:698px;width:51px"></div>
<div class="tbg" style="left:749px;width:71px"></div>
<div class="abs" style="left:820px;top:113px;width:1px;height:50px;background:#cfeedd"></div>
<div class="tbg" style="left:821px;width:71px"></div>
<!-- toolbar icons -->
<svg style="left:0;top:113px" width="900" height="50">
 <g fill="none" stroke="#fff" stroke-width="2.8" stroke-linecap="round">
  <circle cx="16" cy="23" r="6.8"/><path d="M21 28L28.5 35"/>
  <path d="M46.5 28L51 23.5L55.5 28"/>
  <path d="M118 23.5L122.5 28L127 23.5" stroke="#e8fff0"/>
 </g>
 <g fill="none" stroke="#e6fff0" stroke-width="1.8" stroke-linejoin="round">
  <path d="M90 14.5L101 20L90 25.5L79 20Z"/>
  <path d="M82.5 24L79 26L90 31.5L101 26L97.5 24"/>
  <path d="M82.5 30L79 32L90 37.5L101 32L97.5 30"/>
 </g>
 <g fill="none" stroke="#9a9a9a" stroke-width="2.4" stroke-linecap="round">
  <circle cx="159" cy="22.5" r="7"/><path d="M164 27.5L171.5 35"/><path d="M155.5 22.5H162.5M159 19V26" stroke-width="2"/>
  <circle cx="210.5" cy="22.5" r="7"/><path d="M215.5 27.5L223 35"/><path d="M207 22.5H214" stroke-width="2"/>
 </g>
 <g fill="none" stroke="#9a9a9a" stroke-width="1.9" stroke-linecap="round"><path d="M254 29V20.2Q254 18 255.7 18Q257.3 18 257.3 20V14.7Q257.3 12.6 259.2 12.6Q261.1 12.6 261.1 14.7V12.6Q261.1 10.6 263.1 10.6Q265.1 10.6 265.1 12.6V14.7Q265.1 12.7 267.2 12.7Q269.3 12.7 269.3 14.7V17.2Q269.3 15.3 271.2 15.3Q273.2 15.3 273.2 17.3V31.5Q273.2 38.5 263.5 38.5Q254 38.5 254 31.5Z"/><path d="M261.1 14.7V22.7M265.1 12.6V22.7M269.3 14.7V22.7M257.3 20V24"/><path d="M257.3 26Q261 27 263 32.5"/></g>
 <circle cx="314.5" cy="25" r="12.3" fill="#9a9a9a"/>
 <path d="M305.7 19.5L310.5 18.2L313.9 17.8L318.7 17.3L315.6 19.5L313.9 20.8L312.2 22.5L310.5 24.2L309.2 24.6L307.9 22.1L306.2 20.3ZM310.9 27.2L314.4 27.7L316.1 29.4L315.2 32.0L313.9 34.5L312.6 34.5L311.8 31.1L310.9 28.1ZM320.4 18.2L322.1 19.9L324.2 22.5L324.7 26.4L323.8 29.4L322.1 28.5L319.9 25.5L320.8 22.5L319.9 19.9Z" fill="#fff" stroke="#fff" stroke-width="0.5" stroke-linejoin="round"/>
 <g fill="none" stroke="#d8fff0" stroke-width="2.2">
  <path d="M372 33.5H354V17.5H379V28.5"/>
  <path d="M375 27V33.5M371.8 30.2H378.2" stroke-width="2"/>
 </g>
 <g fill="none" stroke="#a8a8a8" stroke-width="2.2">
  <path d="M419 33.5H405V16.5H429.5V26"/>
  <path d="M422.5 30.8H430" stroke-width="2"/>
 </g>
 <g fill="none" stroke="#a8a8a8" stroke-width="2">
  <circle cx="468" cy="24.5" r="11"/><path d="M468 21V31" stroke-width="2.6"/>
 </g>
 <circle cx="468" cy="17.5" r="1.6" fill="#a8a8a8"/>
 <g fill="none" stroke="#a6a6a6" stroke-width="1.2">
  <path d="M504.3 11.3H533.6V20.4H513.6V40.6H504.3Z"/>
  <path d="M513.6 11.3V20.4M504.3 20.4H513.6M516.8 20.4V15.2M520.7 20.4V17.7M524.5 20.4V15.2M528.4 20.4V17.7M513.6 16.5H511M513.6 24H510.5M513.6 28.3H508M513.6 31.5H511M513.6 35.4H508M513.6 38.5H511"/>
 </g>
 <path d="M520.5 25.2L530.5 28.4L529.5 37H519.1Z" fill="#9c9c9c"/>
 <g fill="none" stroke="#aaa" stroke-width="1.2">
  <path d="M556 39L561 44L585 20L580 15Z" transform="translate(0,-5)"/>
  <path d="M561.5 33L563.5 35M565 29.5L567 31.5M568.5 26L571.5 29M572 22.5L574 24.5M575.5 19L577.5 21" />
 </g>
 <g fill="none" stroke="#aaa" stroke-width="1.1">
  <path d="M611 13.5L627.5 17.5L632.5 33.8L609.3 36.7Z"/>
  <circle cx="611" cy="13.5" r="2.2" fill="#fff"/><circle cx="627.5" cy="17.5" r="2.2" fill="#fff"/><circle cx="632.5" cy="33.8" r="2.2" fill="#fff"/><circle cx="609.3" cy="36.7" r="2.2" fill="#fff"/>
 </g>
 <path d="M676.3 10.5L688.5 20H682.5V27.5H670.3V20H664Z" fill="#a8a8a8"/>
 <path d="M658.6 27.5H668.5V31H684.5V27.5H686.8V37H658.6Z" fill="#a8a8a8"/>
 <circle cx="679" cy="33.5" r="1.1" fill="#fff"/><circle cx="683" cy="33.5" r="1.1" fill="#fff"/>
 <path d="M711 15.5H733.5V36M733.5 36H711V15.5" fill="none" stroke="#aaa" stroke-width="2.2" stroke-dasharray="2.2 2.6"/>
 <path d="M722.5 27.5L735 33L729.5 34L734 38.5L732 40.5L727.5 36L726 41Z" fill="#a8a8a8" stroke="#fff" stroke-width="1"/>
 <g fill="none" stroke="#d6ffe8" stroke-width="1.8">
  <circle cx="774" cy="15.5" r="5.6"/>
 </g>
 <path d="M774 14V18.5" stroke="#d6ffe8" stroke-width="1.8"/><circle cx="774" cy="12.2" r="1" fill="#d6ffe8"/>
 <path d="M774 27.2L788 33L774 39L760 33Z" fill="#e6fff0"/>
 <path d="M764.8 35L778.6 29.1M769.4 37L783.2 31.1M764.8 31.1L778.6 37M769.4 29.1L783.2 35" stroke="#006b35" stroke-width="1.2"/>
 <path d="M801.5 23L807 28.5L812.5 23" fill="none" stroke="#fff" stroke-width="2.8" stroke-linecap="round"/>
 <g fill="none" stroke="#e8fff0" stroke-width="2.2">
  <rect x="840" y="15" width="12" height="6"/>
  <path d="M840 32H836V21H856.5V32H852.5"/>
  <rect x="840" y="28" width="12.5" height="9"/>
 </g>
 <circle cx="852.5" cy="24.2" r="1" fill="#e8fff0"/>
 <path d="M873 23L878.5 28.5L884 23" fill="none" stroke="#fff" stroke-width="2.8" stroke-linecap="round"/>
</svg>
<!-- VIRGIN logo -->
<div class="abs" style="left:135px;top:104px;width:142px;height:17px;background:#fff"></div>
<svg style="left:0;top:0" width="300" height="125">
 <defs><linearGradient id="vg" x1="0" y1="0" x2="1" y2="1"><stop offset="0" stop-color="#4d4c9e"/><stop offset="0.55" stop-color="#9796cc"/><stop offset="1" stop-color="#c6c5e4"/></linearGradient></defs>
 <rect x="140.3" y="82.6" width="34" height="31" fill="url(#vg)"/>
 <path d="M146 86.5H152M147.5 86.5L157.5 110.5L166 93.5M162.5 93.5H168.5M153 110.5H162" fill="none" stroke="#fff" stroke-width="1.8"/>
 <path d="M148.5 86.5L157.5 108" stroke="#fff" stroke-width="2.6"/>
 <path d="M169.5 89.5L173 86" stroke="#fff" stroke-width="1.8" stroke-linecap="round"/>
 <text x="180.5" y="111" font-family="Liberation Sans" font-size="22.5" fill="#3b3a7c" textLength="90" lengthAdjust="spacing" stroke="#fff" stroke-width="0.3">VIRGIN</text>
</svg>
<!-- panel -->
<div class="abs" id="panel"></div>
<div class="abs" id="scr"></div>
<svg style="left:490px;top:460px" width="14" height="40"><path d="M498.5 468.5L494.8 472L498.5 475.5Z" transform="translate(-490 -460)" fill="none" stroke="#fafafa" stroke-width="1.2"/><path d="M494.8 488.2L498.8 492L494.8 495.8Z" transform="translate(-490 -460)" fill="none" stroke="#fafafa" stroke-width="1.2"/></svg>
<div class="abs" style="left:490px;top:163px;width:3px;height:42px;background:#5a5a5a"></div>
<svg style="left:7px;top:178px" width="20" height="14"><path d="M4.6 2.9H14.2M4.6 3.2C8.5 4 9.5 10 14.3 10.8" fill="none" stroke="#0b5a33" stroke-width="1.9"/><g fill="#f4fff8" stroke="#1a2a22" stroke-width="1"><circle cx="3" cy="2.9" r="1.8"/><circle cx="16" cy="2.9" r="1.8"/><circle cx="16" cy="11" r="1.8"/></g></svg>
<div class="abs" style="left:40.5px;top:178.5px;font-size:13px;color:#555;white-space:nowrap">Кадастрална карта и регистри</div>
<svg style="left:468px;top:181px" width="14" height="10"><path d="M2 2L7 7L12 2" fill="none" stroke="#006b35" stroke-width="2.6"/></svg>
<div class="abs" style="left:0;top:205px;width:490px;height:33px;background:#5b5b5b"></div>
<div class="abs" style="left:0;top:210px;width:101px;height:28px;background:#f1f1f1"></div>
<div class="tab" style="left:5.5px;color:#555;letter-spacing:-0.55px">БЪРЗО ТЪРСЕНЕ</div>
<div class="tab" style="left:109px;letter-spacing:-0.7px">АДРЕС</div>
<div class="tab" style="left:161px">ИДЕНТИФИКАТОР</div>
<div class="tab" style="left:275px;letter-spacing:-0.3px">СТАР ИДЕНТ.</div>
<div class="tab" style="left:360px;letter-spacing:-0.32px">ГЕОД. ОСНОВА</div>
<div class="lbl" style="left:3.5px;top:250.5px">Ключови думи</div>
<div class="abs" style="left:3px;top:269px;width:475px;height:30px;background:#fff;border:1px solid #b5b5b5"></div>
<div class="abs" style="left:3px;top:313px;width:14px;height:14px;background:#fff;border:1px solid #e2e2e2"></div>
<div class="abs" style="left:3px;top:339px;width:14px;height:14px;background:#fff;border:1px solid #e2e2e2"></div>
<svg style="left:3px;top:339px" width="14" height="14"><path d="M3.5 8L6 11.5L11 2.5" fill="none" stroke="#1a9e50" stroke-width="1.6"/></svg>
<div class="lbl" style="left:28.5px;top:313.5px">Текущ изглед на картата</div>
<div class="lbl" style="left:28.5px;top:340px">Първите 200 резултата</div>
<div class="abs" style="left:326px;top:316px;width:150px;height:30px;background:#006b35;color:#e8fff0;font-size:13px;letter-spacing:-0.55px;text-align:center;line-height:30px">ТЪРСИ</div>
<div class="abs" style="left:0;top:361px;width:490px;height:2px;background:repeating-linear-gradient(90deg,#cacaca 0,#cacaca 14.5px,transparent 14.5px,transparent 20px);background-position:-6px 0"></div>
<div class="sq" style="left:3px"></div><div class="sq" style="left:52px"></div><div class="sq" style="left:101px"></div><div class="sq" style="left:149px"></div><div class="sq" style="left:198px"></div><div class="sq" style="left:247px"></div><div class="sq" style="left:296px"></div><div class="sq" style="left:344px"></div>
<svg style="left:0;top:370px" width="420" height="40">
 <g fill="#555">
  <path d="M33.5 12.5h2v13h-2zM39 12.5h2v13h-2zM44 12.5h2v13h-2zM31.5 15h15v2h-15zM31.5 19.5h15v2h-15zM31.5 23.5h15v2h-15z"/>
  <path d="M88 12.5L80.5 19.5H83V24.5H86.5V20.5H89.5V24.5H93V19.5H95.5Z"/>
  <path d="M131 11h10.5v16h-10.5z"/><rect x="132.5" y="13.5" width="7.5" height="1" fill="#8a8a8a"/><circle cx="138.5" cy="20" r="0.9" fill="#ddd"/>
  <path d="M184.5 27.5C182 24 178 20 178 16.5A6.5 6.5 0 0 1 191 16.5C191 20 187 24 184.5 27.5ZM184.5 14A2.5 2.5 0 1 0 184.5 19A2.5 2.5 0 1 0 184.5 14Z" fill-rule="evenodd"/>
  <path d="M234 11.5L242 16L234 20.5L226 16Z"/>
  <path d="M228 19L226 20.5L234 25L242 20.5L240 19L234 22.5Z" fill="none" stroke="#555" stroke-width="1.5"/>
  <path d="M283 10v15M283 10l6 2.5l-6 2.5" stroke="#555" stroke-width="1.3"/>
  <path d="M283 10h5.5v5h-5.5z"/>
  <path d="M279 26.5h8" stroke="#555" stroke-width="1.6"/>
 </g>
 <g fill="none" stroke="#777" stroke-width="1">
  <path d="M323.5 11L335 13L339 27L322 28Z"/>
  <circle cx="323.5" cy="11" r="1.6" fill="#f1f1f1"/><circle cx="335" cy="13" r="1.6" fill="#f1f1f1"/><circle cx="339" cy="27" r="1.6" fill="#f1f1f1"/><circle cx="322" cy="28" r="1.6" fill="#f1f1f1"/>
 </g>
</svg>
<div class="abs" style="left:370px;top:383.5px;font-size:12.3px;color:#666;white-space:nowrap">Всички</div>
<!-- result -->
<div class="abs" style="left:3px;top:411px;width:485px;height:30px;background:#e6e6e6"></div>
<div class="abs" style="left:428px;top:411px;width:30px;height:30px;background:#f0ecb0"></div>
<div class="abs" style="left:458px;top:411px;width:30px;height:30px;background:#e2dc8c"></div>
<svg style="left:0;top:411px" width="490" height="30">
 <path d="M8.5 8h2v14h-2zM13 8h2v14h-2zM17.5 8h2v14h-2zM6 10.5h15.5v2H6zM6 14.5h15.5v2H6zM6 18.5h15.5v2H6z" fill="#555"/>
 <g fill="none" stroke="#444" stroke-width="2.4" stroke-linecap="round"><circle cx="441" cy="13" r="6.6"/><path d="M446 18L451 23"/></g>
 <path d="M473 6.5V23.5M464.5 15H481.5" stroke="#444" stroke-width="3"/>
</svg>
<div class="abs" style="left:26.5px;top:418px;font-size:13px;color:#555;white-space:nowrap">Поземлен имот 07598.372.19 гр. Бяла</div>
<div class="abs" id="ybox"><div class="yl">Поземлен имот 07598.372.19, област Варна, община Бяла, гр. Бяла, ЗВКО</div><div class="yl">"СТОЯН КУРУ", вид собств. Частна, вид територия Урбанизирана, НТП Нива,</div><div class="yl">площ 1510 кв.м., стар номер 80061, квартал 372, парцел част II-61,</div><div class="yl">Заповед за одобрение на КККР № <b>РД-18-47/18.08.2006 г.</b> на ИЗПЪЛНИТЕЛНИЯ</div><div class="yl">ДИРЕКТОР НА АК,</div><div class="yl">Заповед за изменение на КККР № <b>КД-14-03-3385/19.12.2011 г.</b> на НАЧАЛНИК НА</div><div class="yl">СГКК - ВАРНА</div></div>
<div class="abs" style="left:19px;top:575.5px;font-size:14px;color:#555">1</div>
<div class="abs" style="left:418px;top:577px;font-size:12.5px;color:#666;white-space:nowrap">1 - 1 / 1</div>
<div class="abs" style="left:0;top:611px;width:493px;height:225px;background:#5c5c5c"></div>
<div class="abs" style="left:131px;top:716px;font-size:30.5px;letter-spacing:0.5px;font-weight:bold;color:#843838;white-space:nowrap">ВЪРДЖЪН ЕООД</div>
<!-- map -->
<svg style="left:0;top:0" width="1104" height="836" viewBox="0 0 1104 836">
<defs><filter id="bl" x="-5%" y="-5%" width="110%" height="110%"><feGaussianBlur stdDeviation="0.45"/></filter><clipPath id="mc"><rect x="503" y="163" width="601" height="669"/></clipPath></defs>
<g clip-path="url(#mc)">
<rect x="503" y="163" width="601" height="669" fill="#f1efe9"/>
<!-- gray zone -->
<path d="M653 163H1104V497.3L1074 470.5L1027.1 403.5L1003 380L972.6 329L937.7 291.5L903.7 252.8L894.2 249.5L692.2 249.5Z" fill="#dedbdc"/>
<!-- streets -->
<g stroke-linecap="round" stroke-linejoin="round" fill="none">
 <path d="M850 155L900.5 221.5L967.2 307.7L1040.5 380L1110 456" stroke="#9a9a9a" stroke-width="12"/>
 <path d="M850 155L900.5 221.5L967.2 307.7L1040.5 380L1110 456" stroke="#fcfcfc" stroke-width="10.5"/>
 <path d="M1084 155L1022.4 259.9L987 311" stroke="#fcfcfc" stroke-width="9"/>
 <path d="M1036.8 189.8L1052.3 213" stroke="#fcfcfc" stroke-width="8"/>
 <path d="M697 157L727 229" stroke="#fcfcfc" stroke-width="8.5"/>
</g>
<!-- green parcel -->
<path d="M1008.5 204.3L1031.1 216.8L1003.9 267.3L976.7 253.3L986 240.9L993.8 227.7Z" fill="#8fdcbe"/>
<!-- highlighted parcel -->
<path d="M689.5 402.3L759.8 400.9L761.8 461.7L691.8 461.7Z" fill="#c0c0d4" stroke="#1414c0" stroke-width="2.4"/>
<!-- thin lines -->
<g fill="none" stroke="#1a1a1a" stroke-width="1">
 <path d="M502.9 268.5L613.4 188.7"/>
 <path d="M502.9 284.9L634.9 193.9"/>
 <path d="M584 183L591.9 202.5"/>
 <path d="M591.3 223.7L672 386"/>
 <path d="M629.2 194.4L657.3 253.3"/>
 <path d="M619.1 280.6L711 216"/>
 <path d="M512.1 280L607.6 479.8"/>
 <path d="M550.2 253.3L637.8 436.7"/>
 <path d="M502.9 355.2L536.7 331.7"/>
 <path d="M710 208L725.3 240.4L726.8 257.6L675.1 381L662.2 400L637.8 436.7"/>
 <path d="M726.8 257.6L721.6 303.5L688 383.9L689.5 402.3"/>
 <path d="M721.6 303.5L752.6 303L798.5 400L865.6 525.9L863.3 537.4"/>
 <path d="M755.5 247.6L753 258L804 358.1L863.3 480L880.5 513L892 515"/>
 <path d="M704.1 163.3L720.4 190.4L742.2 228.5Q748 231 758.5 230.7L850.9 190.4L855.2 192.6"/>
 <path d="M755.2 245.9L857.4 199.1L870.4 201.3"/>
 <path d="M902.6 237.8L838.9 290"/>
 <path d="M782.4 236.1L941.2 472"/>
 <path d="M781.3 166.5L802 210"/>
 <path d="M767 284.9L802.9 267.7"/>
 <path d="M826.4 300.2L900 239"/>
 <path d="M858.5 349L942.3 284.7"/>
 <path d="M905.1 316.4L996.1 426.9"/>
 <path d="M865.3 410L890.2 397.4"/>
 <path d="M759.8 400.9L798.5 400"/>
 <path d="M761.8 461.7L829 460.9"/>
 <path d="M735.4 462.6L798.7 589.1"/>
 <path d="M836.5 423L893 396"/>
 <!-- cul-de-sac -->
 <path d="M502.9 611L597.6 569.4C630 555 660 535 673 505C680 488 680 470 678 440C677 430 673 424 667 424C662 424 659 426 657.9 428.7"/>
 <path d="M502.9 623.9L597.6 582.3C640 562 672 540 685 510C692 490 693 475 691.8 461.7"/>
 <path d="M637.8 436.7L607.6 480.4C598 492 590 496 575 502C560 508 545 511 530 509C515 506 508 500 502.9 497.6"/>
 <path d="M637.8 436.7L657.9 428.7L626.3 477.5C615 494 605 502 590 510C575 517 555 522 540 521C525 520 512 516 502.9 513.4"/>
 <path d="M597.6 582.3L668 697.1"/>
 <path d="M543.1 607.3L607.4 702"/>
 <path d="M510 623.3L563.3 702"/>
 <!-- intersection -->
 <path d="M668 697.1L761.6 620L863.3 537.4"/>
 <path d="M690 702L789.1 620L870.4 553.2L880.5 559L952.3 703.9"/>
 <path d="M892 515L1032.1 399.3L1033.8 389.2L1031.3 384.2L1007 385L1001.1 395.1L1004.5 405.1L988.6 416"/>
 <path d="M897.7 531.7L1042.2 411.8L1052.2 411L1053.9 411.8L1104 467.1"/>
 <path d="M897.7 531.7L896.3 541.7L897.7 546L960 669.5L966.3 683.8L975.9 686.1L1104 576.2"/>
 <path d="M983 698.1L1104 594.1"/>
 <path d="M983 698.1L981.8 705L983.1 702.6"/>
 <path d="M725.8 672.3L749.2 702"/>
 <path d="M780 636.5L834.5 704"/>
 <path d="M824.5 592L894.8 704"/>
 <path d="M1001.1 447L1104 560"/>
 <path d="M1027.1 475.5L1075.7 437"/>
 <path d="M983 565.4L1052.6 506.2"/>
 <path d="M929.3 505.8L1039.2 631.2"/>
 <path d="M1026.1 662.2L1061.9 701.7"/>
 <!-- right of street -->
 <path d="M876.6 189.8L910.8 224.1L930.7 248.4L955.5 281.3L1000.2 316.5L1030 355L1084.2 420"/>
 <path d="M910.8 224.1L948.4 190.9L963.9 215.2L1024.6 190.9L1036.8 211.9L1003.9 267.3"/>
 <path d="M963.9 215.2L1016.9 239.6"/>
 <path d="M928.5 244L963.9 215.2"/>
 <path d="M953.2 271.1L975.9 253.9"/>
 <path d="M953.3 270.4L976.7 253.3L1003.1 268.9"/>
 <path d="M1056.7 213L1081 224.1L1104 236"/>
 <path d="M1054.5 217.5L1083.2 232.9"/>
 <path d="M1036.8 246.5L1080.9 274.5L1104 285.2"/>
 <path d="M1080.9 274.5L1104 240"/>
 <path d="M1017.4 284.2L1052.9 304.6L1078.8 320.8L1104 332"/>
 <path d="M1036.8 246.5L996.9 319.7"/>
 <path d="M1015.2 341.2L1038.9 319.7L1049.7 306.8L1052.9 304.6"/>
 <path d="M1078.8 320.8L1073.4 340.2L1033.5 363.9"/>
 <path d="M1073.4 340.2L1104 378"/>
 <path d="M1059.4 390.8L1104 367.1"/>
 <path d="M1057.3 390L1104 443.6"/>
</g>
<g fill="none" stroke="#333" stroke-width="1.6">
 <path d="M881 176.6L906.4 167.7L909.7 174.4L884.3 184.3Z"/>
 <path d="M923 220.8L930.7 215.2L938.5 224.1L929.6 230.7Z" stroke-width="1"/>
 <path d="M1076.6 188.7L1081 182.1L1100.9 193.1L1096.5 213L1089.8 213L1092 198.7L1076.6 192Z" stroke-width="2"/>
 <path d="M975 163L980 170L1000 163" stroke-width="2"/>
 <path d="M866 163L875 180" stroke-width="2"/>
 <path d="M939.6 163.3L948.4 188.7" stroke-width="1.8"/>
 <path d="M1014.7 163.3L1024.6 190.9" stroke-width="1.8"/>
 <path d="M1093 163L1100 178L1104 180" stroke-width="2"/>
 <path d="M721 170C716 165 726 160 733 165C739 162 743 170 739 176C741 182 731 185 727 181C721 180 719 175 721 170Z" stroke-width="1.3"/>
 <path d="M745 186C743 181 750 178 755 182C761 180 763 186 760 191C761 196 752 198 748 194C743 193 743 189 745 186Z" stroke-width="1.3"/>
 <path d="M708 163L718 190L745 176L790 163" stroke-width="2"/>
 <path d="M613.4 188.7L653 162" stroke-width="1.8" stroke="#555"/>
 <path d="M634.9 193.9L672.2 164.3" stroke-width="1.8" stroke="#555"/>
 <path d="M576.1 164.3L584 183" stroke-width="1.8" stroke="#555"/>
 <path d="M689 163.3L710 208" stroke-width="1.6" stroke="#444"/>
</g>
<path d="M512 702Q527 700 542 702" stroke="#333" stroke-width="1.6" fill="none" opacity="0.8"/>
<!-- blurry lines lower tile -->
<g fill="none" stroke="#4a4a4a" stroke-width="2.4" filter="url(#bl)">
 <path d="M563.3 702L601 760L604.6 770L622.5 772.8L659.7 823.8L665 832"/>
 <path d="M607.4 702L629.4 730.1"/>
 <path d="M665.2 702L599.1 754.9L508.3 823.8"/>
 <path d="M690 702L641 745L636 760L640 775L670 832"/>
 <path d="M676.2 713.6L742.3 790.7L776 832"/>
 <path d="M749.2 702L804 765.9L858 832"/>
 <path d="M502.8 713.6L552.3 788L578 832"/>
 <path d="M604.6 770L520 832"/>
 <path d="M834.5 704L890.9 768.7L942 832"/>
 <path d="M894.8 704L922.5 739.8"/>
 <path d="M952.3 703.9L958.3 710.9L890.9 763.2L800 829.3"/>
 <path d="M957 710.9L1009.3 790.7L1035 832"/>
 <path d="M983.1 702.6L980.4 710.9L990 724.6L1034 790.7L1062 832"/>
 <path d="M1014.8 771.4L1075.4 716.4"/>
 <path d="M1061.9 701.7L1104 743.9"/>
 <path d="M800 760.4L827.5 790.7L855 832"/>
 <path d="M1083.4 610.8L1104 632.4"/>
 <circle cx="893.6" cy="800.4" r="37"/>
 <text x="893.6" y="815" font-family="Liberation Serif" font-size="36" fill="#444" stroke="none" text-anchor="middle">373</text>
</g>
<path d="M865.6 525.9L880.5 513M966.3 683.8L956.7 705M1033.8 390L1053.9 411.8" fill="none" stroke="#222" stroke-width="0.9" stroke-dasharray="2 1.5"/>
<!-- dashed -->
<path d="M503 677.8L607.4 620L772.7 523.4L860 457L950 389.4L964.1 359.9L981.2 327.2L986 320" fill="none" stroke="#d4a860" stroke-width="1" stroke-dasharray="5 2.5 1.5 2.5"/>
<!-- buildings -->
<g stroke="#222" stroke-width="1" fill="#d7a84c">
 <path d="M939.2 242L957.6 226.9L966.2 235.5L946.8 251.7Z"/>
 <path d="M957.6 274.3L966.2 264.6L968.3 260.3L978 260.3L993.1 268.9L985.6 276.5L979.1 279.7L970.5 286.2L965.1 287.2Z"/>
 <path d="M920.9 313.1L943.5 303L951.1 307.7L955.4 314.2L965.1 324.9L953.2 335.7L940.3 319.6L925.2 322.8Z" fill="#f6cc73"/>
 <path d="M961.9 351.9L981.2 343.3L989.9 359.4L974.8 367L968.3 365.9Z"/>
 <path d="M1008.7 395.1L1017.9 384.2L1024.6 390.9L1022.1 394.2L1013.7 401.8Z"/>
 <path d="M1005.5 311.1L1021.7 291.7L1034.6 298.2L1023.9 308.9L1026 321.9L1018.5 330.5L1005.5 319.7Z"/>
 <path d="M1035.7 263.7L1041.1 258.3L1062.6 271.2L1058.3 278.8Z"/>
 <path d="M1070.2 286.3L1073.4 280.9L1091.7 289.5L1085.2 306.8L1080.9 306.8L1070.2 298.2Z"/>
 <path d="M1058.3 362.8L1065.9 354.2L1073.4 357.4L1075.6 364.9L1069.1 371.4L1061.6 371.4Z"/>
 <path d="M1064 352L1071 345.5L1074 351L1069 356Z"/>
 <path d="M1075.5 355L1079 352L1081.5 355.5L1078 358.5Z"/>
 <path d="M1055.6 229.6L1058.9 223L1082.1 234L1078.8 241.8Z" fill="#eee"/>
 <path d="M1095 380L1104 372V395L1098 398Z"/>
</g>
<!-- circles -->
<circle cx="895" cy="345.4" r="19.4" fill="none" stroke="#222" stroke-width="1.2"/>
<circle cx="1046.4" cy="546" r="39" fill="none" stroke="#333" stroke-width="2.2"/>
<text x="880.5" y="351.5" font-family="Liberation Sans" font-size="16" fill="#111" textLength="29" lengthAdjust="spacingAndGlyphs">373</text>
<text x="1016.5" y="558" font-family="Liberation Serif" font-size="36" fill="#222" stroke="#222" stroke-width="0.35" textLength="60" lengthAdjust="spacingAndGlyphs">374</text>
<!-- labels -->
<g font-family="Liberation Serif" font-size="5.5" font-weight="bold" fill="#111" text-anchor="middle">
 <text x="632" y="247.5">6</text><text x="680.3" y="291.7">8</text><text x="617.7" y="322.8">5</text><text x="582.4" y="358.6">4</text>
 <text x="781.3" y="255.3">1</text><text x="843.5" y="252.4">2</text><text x="889.4" y="289">3</text><text x="832.3" y="343.4">8</text>
 <text x="745.4" y="357.2">1</text><text x="800" y="364.4">9</text><text x="523" y="427.3">3</text><text x="734" y="427.8">19</text>
 <text x="797.1" y="429.3">20</text><text x="676.5" y="517.4">15</text><text x="708.1" y="575.7">4</text><text x="758.4" y="636.8">10</text>
 <text x="894.7" y="450.8">7</text><text x="810" y="509.3">3</text><text x="886.2" y="536.5">6</text><text x="996.6" y="501.9">4</text>
 <text x="1098.5" y="498.2">2</text><text x="1044" y="437">1</text><text x="1052.4" y="564.6">3</text><text x="968.7" y="593.7">5</text>
 <text x="1054.3" y="632.4">8</text><text x="898.6" y="639.3">5</text><text x="613.4" y="649.5">5</text><text x="573" y="672.1">6</text>
 <text x="524.2" y="681.2">7</text><text x="793.3" y="689.5">3</text><text x="729.9" y="709.6">2</text>
 <text x="678.4" y="725.3">1</text><text x="850.3" y="666.6">4</text><text x="1030.8" y="702.5">7</text><text x="1080.9" y="726.6">10</text>
 <text x="959.2" y="725.3">6</text><text x="933.4" y="389.3">6</text><text x="1096.6" y="672.6">3</text>
 <text x="971.6" y="344.5" font-size="7">11</text>
 <text x="1048" y="307">82</text>
 <text x="966" y="244" font-size="7.5">191</text><text x="1009" y="245" font-size="7.5">271</text>
 <text x="1022.8" y="268.9" font-size="7">203</text><text x="1070.2" y="280.3" font-size="7">205</text><text x="1058.3" y="329.2" font-size="7">204</text>
 <text x="1078" y="243" font-size="7">206</text>
</g>
<g font-family="Liberation Sans" fill="#333">
 <text x="0" y="0" font-size="13" transform="translate(1000.5 289) rotate(-61)" letter-spacing="0.5">ул. Здравец</text>
 <text x="0" y="0" font-size="12" transform="translate(1055 377) rotate(55)">55</text>
 <text x="0" y="0" font-size="11" transform="translate(955 261) rotate(58)">45</text>
 <text x="0" y="0" font-size="10" transform="translate(959 281) rotate(58)">45</text>
 <text x="0" y="0" font-size="11" transform="translate(737 196) rotate(60)">35</text>
 <text x="0" y="0" font-size="9" transform="translate(1045 234) rotate(-60)">5</text>
 <text x="0" y="0" font-size="15" font-weight="bold" transform="translate(1026 165) rotate(64)" fill="#444">ЕЛС</text>
</g>
<g font-family="Liberation Serif" font-size="7" fill="#222">
 <text x="996" y="321">РП104</text><text x="996" y="330">95.902</text>
 <text x="740" y="247">5301</text><text x="740" y="254">37.33</text>
 <text x="1086" y="432">РП1</text><text x="1086" y="440">97.4</text>
</g>
</g>
</svg>


<!-- bottom bar -->
<div class="abs" style="left:508px;top:791px;width:596px;height:35px;background:rgba(38,168,92,0.84)"></div>
<div class="abs" style="left:687px;top:791px;width:1px;height:35px;background:#a8e2c0"></div>
<div class="abs" style="left:816px;top:791px;width:1px;height:35px;background:#a8e2c0"></div>
<div class="abs" style="left:946px;top:791px;width:1px;height:35px;background:#a8e2c0"></div>
<div class="bl" style="left:516px">Мащаб</div><div class="bl" style="left:564px">1:</div>
<div class="bl" style="left:696px">X</div><div class="bl" style="left:825px">Y</div>
<div class="bl" style="left:954.5px">Координатна система</div>
<div class="bi" style="left:587px;width:92px">2352</div>
<div class="bi" style="left:716px;width:92px">4750862,813</div>
<div class="bi" style="left:846px;width:92px">694703,747</div>
<div class="bi" style="left:1091px;width:40px">К</div>
<div class="abs" style="left:0;top:832px;width:1104px;height:4px;background:#fff"></div>
</body></html>
